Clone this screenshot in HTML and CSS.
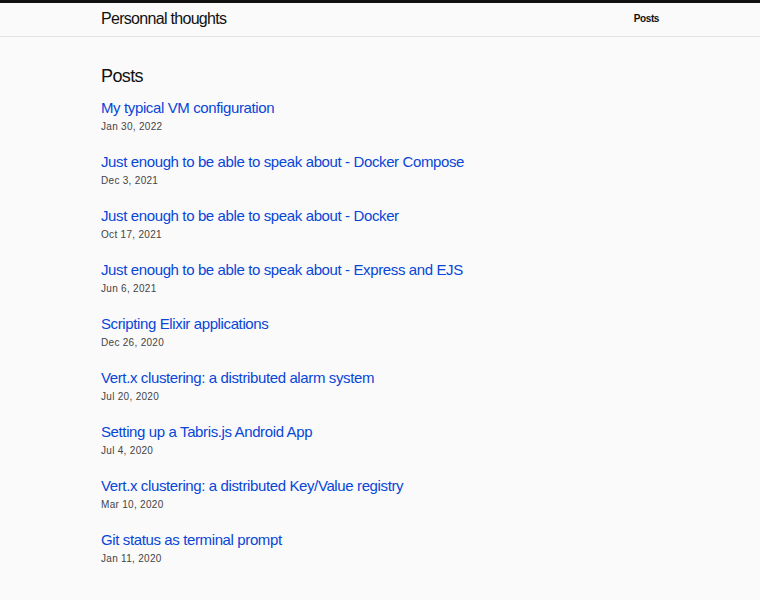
FILE: index.html
```html
<!DOCTYPE html>
<html lang="en">
  <head>
    <meta charset="UTF-8" />
    <meta name="viewport" content="width=device-width, initial-scale=1.0" />
    <title>Personnal thoughts</title>
    <link rel="stylesheet" href="styles.css">
  </head>
  <body>
    <header class="site-header">
      <div class="wrapper header-inner">
        <a class="site-title" href="#">Personnal thoughts</a>
        <nav class="site-nav">
          <a href="#">Posts</a>
        </nav>
      </div>
    </header>

    <main class="wrapper">
      <h2 class="post-list-heading">Posts</h2>
      <ul class="post-list">
        <li>
          <a class="post-link" href="#">My typical VM configuration</a>
          <span class="post-meta">Jan 30, 2022</span>
        </li>
        <li>
          <a class="post-link" href="#">Just enough to be able to speak about - Docker Compose</a>
          <span class="post-meta">Dec 3, 2021</span>
        </li>
        <li>
          <a class="post-link" href="#">Just enough to be able to speak about - Docker</a>
          <span class="post-meta">Oct 17, 2021</span>
        </li>
        <li>
          <a class="post-link" href="#">Just enough to be able to speak about - Express and EJS</a>
          <span class="post-meta">Jun 6, 2021</span>
        </li>
        <li>
          <a class="post-link" href="#">Scripting Elixir applications</a>
          <span class="post-meta">Dec 26, 2020</span>
        </li>
        <li>
          <a class="post-link" href="#">Vert.x clustering: a distributed alarm system</a>
          <span class="post-meta">Jul 20, 2020</span>
        </li>
        <li>
          <a class="post-link" href="#">Setting up a Tabris.js Android App</a>
          <span class="post-meta">Jul 4, 2020</span>
        </li>
        <li>
          <a class="post-link" href="#">Vert.x clustering: a distributed Key/Value registry</a>
          <span class="post-meta">Mar 10, 2020</span>
        </li>
        <li>
          <a class="post-link" href="#">Git status as terminal prompt</a>
          <span class="post-meta">Jan 11, 2020</span>
        </li>
      </ul>
    </main>
  </body>
</html>
```

FILE: styles.css
```css
body {
  font-family: "Liberation Sans", Arial, sans-serif;
  color: #111;
  margin: 0;
  background-color: #fafafa;
}
a {
  text-decoration: none;
}
.wrapper {
  max-width: 558px;
  margin: 0 auto;
}
.site-header {
  border-top: 3px solid #111;
  border-bottom: 1px solid #e4e4e4;
}
.header-inner {
  display: flex;
  justify-content: space-between;
  align-items: center;
  height: 31px;
  padding-bottom: 2px;
}
.site-title {
  font-size: 16px;
  color: #111;
  letter-spacing: -0.7px;
}
.site-nav {
  padding-bottom: 4px;
}
.site-nav a {
  font-size: 10px;
  font-weight: bold;
  letter-spacing: -0.4px;
  color: #111;
}
.post-list-heading {
  font-size: 18px;
  font-weight: normal;
  letter-spacing: -0.6px;
  margin: 29px 0 11px;
}
.post-list {
  list-style: none;
  margin: 0;
  padding: 0;
}
.post-list li {
  display: flex;
  flex-direction: column;
  margin-bottom: 19px;
}
.post-link {
  font-size: 15px;
  color: #0846d8;
  line-height: 20px;
  letter-spacing: -0.38px;
}
.post-meta {
  font-size: 10px;
  line-height: 12px;
  letter-spacing: 0.3px;
  color: #444;
  margin-top: 3px;
}
```
